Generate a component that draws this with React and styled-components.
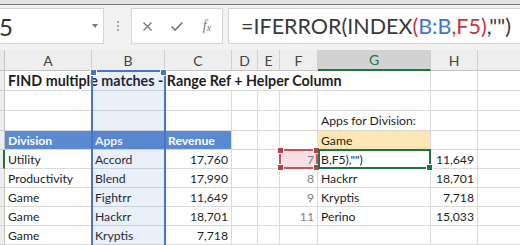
import React from "react";
import styled, { createGlobalStyle } from "styled-components";

const GlobalStyle = createGlobalStyle`
  html, body {
    margin: 0;
    padding: 0;
    background: #ffffff;
  }
  body {
    width: 520px;
    height: 245px;
    overflow: hidden;
    font-family: Lato, "Liberation Sans", sans-serif;
  }
`;

const COLUMNS = ["A", "B", "C", "D", "E", "F", "G", "H", "I"];
const TITLE = "FIND multiple matches - Range Ref + Helper Column";

// one entry per sheet row, keyed by column letter
const ROWS = [
  { A: { text: TITLE, kind: "title" } },
  {},
  { G: { text: "Apps for Division:" } },
  {
    A: { text: "Division", kind: "head" },
    B: { text: "Apps", kind: "head" },
    C: { text: "Revenue", kind: "head" },
    G: { text: "Game", kind: "input" }
  },
  {
    A: { text: "Utility" },
    B: { text: "Accord" },
    C: { text: "17,760", right: true },
    F: { text: "7", right: true, kind: "helper", mark: "ref" },
    G: { text: 'B,F5),"")', mark: "active" },
    H: { text: "11,649", right: true }
  },
  {
    A: { text: "Productivity" },
    B: { text: "Blend" },
    C: { text: "17,990", right: true },
    F: { text: "8", right: true, kind: "helper" },
    G: { text: "Hackrr" },
    H: { text: "18,701", right: true }
  },
  {
    A: { text: "Game" },
    B: { text: "Fightrr" },
    C: { text: "11,649", right: true },
    F: { text: "9", right: true, kind: "helper" },
    G: { text: "Kryptis" },
    H: { text: "7,718", right: true }
  },
  {
    A: { text: "Game" },
    B: { text: "Hackrr" },
    C: { text: "18,701", right: true },
    F: { text: "11", right: true, kind: "helper" },
    G: { text: "Perino" },
    H: { text: "15,033", right: true }
  },
  {
    A: { text: "Game" },
    B: { text: "Kryptis" },
    C: { text: "7,718", right: true }
  }
];

const ACTIVE_ROW = 4;

function App() {
  return (
    <Window>
      <GlobalStyle />
      <TopEdge />
      <FormulaBar>
        <NameBox>
          <NameText>5</NameText>
          <Caret />
        </NameBox>
        <Grip>
          <Dot />
          <Dot />
          <Dot />
        </Grip>
        <Buttons>
          <IconSlot>
            <svg width="11" height="11" viewBox="0 0 11 11">
              <path d="M1.5 1.5 L9.5 9.5 M9.5 1.5 L1.5 9.5" stroke="#777" strokeWidth="1.4" fill="none" />
            </svg>
          </IconSlot>
          <IconSlot>
            <svg width="14" height="11" viewBox="0 0 14 11">
              <path d="M1.5 5.5 L5 9 L12.5 1.5" stroke="#777" strokeWidth="1.6" fill="none" />
            </svg>
          </IconSlot>
          <IconSlot>
            <Fx>f<sub>x</sub></Fx>
          </IconSlot>
        </Buttons>
        <FormulaInput>
          =IFERROR(INDEX<Ref $tone="red">(</Ref>
          <Ref $tone="blue">B:B</Ref>
          <Ref $tone="red">,F5)</Ref>,"")
        </FormulaInput>
      </FormulaBar>

      <Sheet>
        <Corner />
        {COLUMNS.map(col => (
          <ColHead key={col} $active={col === "G"}>{col}</ColHead>
        ))}

        {ROWS.map((row, r) => (
          <React.Fragment key={r}>
            <RowHead $active={r === ACTIVE_ROW} />
            {COLUMNS.map(col => {
              const cell = row[col];
              // the title spills over A..G, so those cells are covered by it
              if (row.A && row.A.kind === "title" && col !== "A" && COLUMNS.indexOf(col) < 7) {
                return null;
              }
              if (!cell) return <Cell key={col} />;
              return (
                <Cell
                  key={col}
                  $kind={cell.kind}
                  $right={cell.right}
                  $mark={cell.mark}
                  $span={cell.kind === "title" ? 7 : 1}
                >
                  {cell.text}
                  {cell.mark === "ref" && (
                    <>
                      <Handle $tone="red" $top $left />
                      <Handle $tone="red" $top />
                      <Handle $tone="red" $left />
                      <Handle $tone="red" />
                    </>
                  )}
                  {cell.mark === "active" && <Handle $tone="green" />}
                </Cell>
              );
            })}
          </React.Fragment>
        ))}

        <ColumnSelection>
          <Handle $tone="blue" $top $left />
          <Handle $tone="blue" $top />
        </ColumnSelection>
      </Sheet>
    </Window>
  );
}

const Window = styled.div`
  width: 520px;
  height: 245px;
  overflow: hidden;
  display: flex;
  flex-direction: column;
  background: #f1f1f1;
`;

const TopEdge = styled.div`
  height: 4px;
  background: #e3e3e3;
  border-bottom: 1px solid #7a7a7a;
`;

const FormulaBar = styled.div`
  display: flex;
  align-items: stretch;
  height: 36px;
  margin-top: 3px;
  margin-bottom: 6px;
`;

const NameBox = styled.div`
  position: relative;
  display: flex;
  align-items: center;
  width: 104px;
  box-sizing: border-box;
  background: #ffffff;
  border: 1px solid #d4d4d4;
  border-left: none;
  overflow: hidden;
`;

const NameText = styled.span`
  font-size: 24px;
  color: #333;
  margin-left: -1px;
`;

const Caret = styled.span`
  position: absolute;
  right: 5px;
  top: 15px;
  width: 0;
  height: 0;
  border-left: 3.5px solid transparent;
  border-right: 3.5px solid transparent;
  border-top: 4px solid #777;
`;

const Grip = styled.div`
  width: 27px;
  display: flex;
  flex-direction: column;
  align-items: center;
  justify-content: center;
  gap: 2px;
`;

const Dot = styled.span`
  width: 2px;
  height: 2px;
  background: #a8a8a8;
`;

const Buttons = styled.div`
  display: flex;
  align-items: center;
  width: 92px;
  box-sizing: border-box;
  background: #ffffff;
  border: 1px solid #d4d4d4;
  margin-right: 5px;
`;

const IconSlot = styled.span`
  width: 31px;
  display: flex;
  align-items: center;
  justify-content: center;
`;

const Fx = styled.span`
  font-family: "Liberation Serif", serif;
  font-style: italic;
  font-size: 14px;
  color: #777;

  sub {
    font-size: 10px;
    vertical-align: -1px;
  }
`;

const FormulaInput = styled.div`
  flex: 1;
  display: flex;
  align-items: center;
  padding-left: 12px;
  background: #ffffff;
  border: 1px solid #d4d4d4;
  border-right: none;
  font-size: 21.5px;
  color: #3a3a3a;
  white-space: pre;
  overflow: hidden;
`;

const Ref = styled.span`
  color: ${p => (p.$tone === "blue" ? "#3d78c6" : "#c6343f")};
`;

const Sheet = styled.div`
  position: relative;
  display: grid;
  grid-template-columns: 5px 87px 73px 67px 26px 22px 38px 113px 47px 110px;
  grid-template-rows: 21px 20px 20px 20px repeat(6, 19px);
  background: #ffffff;
  font-size: 12.2px;
`;

const Corner = styled.div`
  background: #e9e9e9;
  border-right: 1px solid #c4c4c4;
  border-bottom: 1px solid #c4c4c4;
`;

const ColHead = styled.div`
  display: flex;
  align-items: center;
  justify-content: center;
  box-sizing: border-box;
  background: ${p => (p.$active ? "#d2d2d2" : "#eeeeee")};
  color: ${p => (p.$active ? "#2a7049" : "#444444")};
  border-right: 1px solid #d0d0d0;
  border-bottom: ${p => (p.$active ? "2px solid #217346" : "1px solid #c4c4c4")};
  font-size: 14px;
`;

const RowHead = styled.div`
  box-sizing: border-box;
  background: #eeeeee;
  border-right: ${p => (p.$active ? "2px solid #217346" : "1px solid #c4c4c4")};
  border-bottom: 1px solid #d0d0d0;
`;

const cellBackground = {
  head: "#5b8ad0",
  input: "#fde7b4",
  title: "transparent"
};

const Cell = styled.div`
  position: relative;
  grid-column: span ${p => p.$span || 1};
  display: flex;
  align-items: center;
  justify-content: ${p => (p.$right ? "flex-end" : "flex-start")};
  box-sizing: border-box;
  padding: 0 3px 0 3px;
  border-right: 1px solid #dadada;
  border-bottom: 1px solid #dadada;
  background: ${p =>
    p.$mark === "ref" ? "#f7dfe2" : cellBackground[p.$kind] || "#ffffff"};
  color: ${p =>
    p.$kind === "head" ? "#ffffff" : p.$kind === "helper" ? "#808080" : "#1e1e1e"};
  font-weight: ${p => (p.$kind === "head" || p.$kind === "title" ? 700 : 400)};
  font-size: ${p => (p.$kind === "title" ? "14.3px" : "inherit")};
  white-space: nowrap;
  overflow: visible;
  z-index: ${p => (p.$mark ? 3 : "auto")};

  ${p =>
    p.$mark &&
    `
    &::after {
      content: "";
      position: absolute;
      inset: -1px -1px -1px ${p.$mark === "active" ? "0" : "-1px"};
      border: 2px solid ${p.$mark === "ref" ? "#c9525c" : "#217346"};
      pointer-events: none;
    }
  `}
`;

const handleColor = {
  red: "#b8404b",
  green: "#217346",
  blue: "#4677c0"
};

const Handle = styled.span`
  position: absolute;
  z-index: 2;
  width: 5px;
  height: 5px;
  background: ${p => handleColor[p.$tone]};
  border: 1px solid #ffffff;
  ${p => (p.$top ? "top: -3px;" : "bottom: -3px;")}
  ${p => (p.$left ? "left: -3px;" : "right: -3px;")}
`;

const ColumnSelection = styled.div`
  position: absolute;
  grid-column: 3 / 4;
  grid-row: 2 / 11;
  top: -1px;
  left: -1px;
  right: -1px;
  bottom: 0;
  border: 2px solid #4677c0;
  border-bottom: none;
  background: rgba(60, 115, 200, 0.11);
  pointer-events: none;
  z-index: 2;
`;

export default App;
